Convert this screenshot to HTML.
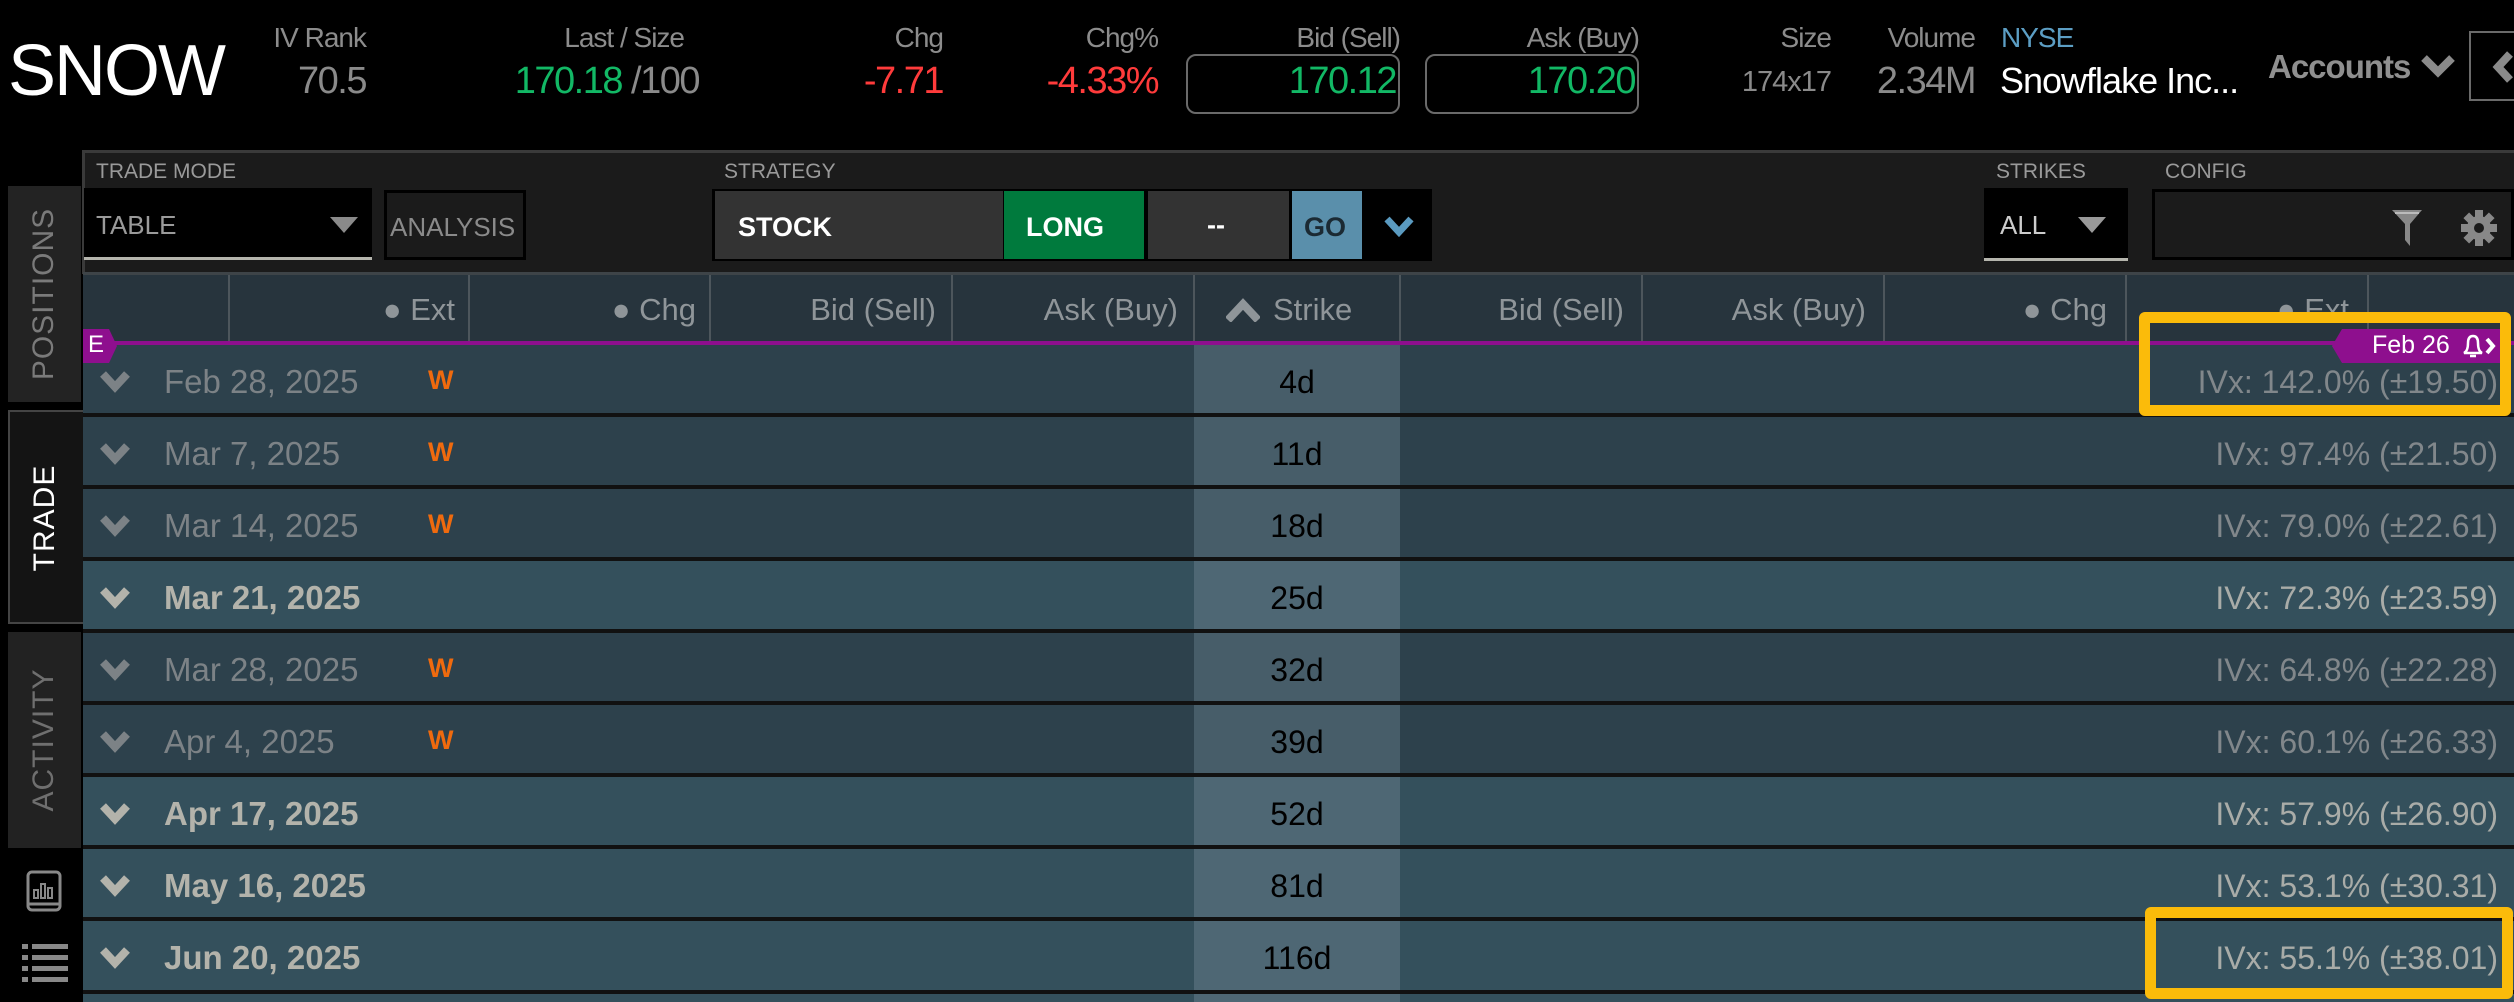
<!DOCTYPE html>
<html style="width:2514px;height:1002px;overflow:hidden"><head><meta charset="utf-8"><style>
*{margin:0;padding:0;box-sizing:border-box}
body{width:2514px;height:1002px;background:#000;position:relative;overflow:hidden;font-family:"Liberation Sans",sans-serif}
.a{position:absolute;white-space:nowrap}
.r{text-align:right}
.lbl{color:#8c8c8c;font-size:28px;letter-spacing:-1px}
.val{font-size:38px;letter-spacing:-1.5px}
.g{color:#12b865}.red{color:#ff3b3b}.gr{color:#8a8a8a}
.box{position:absolute;border:2px solid #6a6a6a;border-radius:10px}
.tl{color:#9a9a9a;font-size:21px;top:160px}
.hc{color:#8f9599;font-size:31px;top:292px}
.row{position:absolute;left:83px;width:2431px;height:72px;border-bottom:4px solid #111}
.wk{background:#2d414c}.mo{background:#34505c}
.wk .sk{background:#475d69}.mo .sk{background:#4e6774}
.sk{position:absolute;left:1111px;width:206px;top:0;bottom:0;color:#000;font-size:32px;text-align:center;line-height:74px}
.dt{position:absolute;left:81px;font-size:33px;line-height:74px}
.wk .dt{color:#7c8286}.mo .dt{color:#b3b3ab;font-weight:bold}
.w{position:absolute;left:345px;top:20px;color:#ef6a0e;font-weight:bold;font-size:27px}
.iv{position:absolute;right:16px;font-size:32px;line-height:74px}
.wk .iv{color:#81878b}.mo .iv{color:#a9aca8}
.chev{position:absolute;left:17px;top:26px}
.sep{position:absolute;top:275px;width:2px;height:67px;background:#4d565c}
</style></head><body>
<!-- header -->
<div class="a" style="left:8px;top:30px;color:#fff;font-size:72px;letter-spacing:-2px">SNOW</div>
<div class="a lbl r" style="right:2148px;top:22px">IV Rank</div>
<div class="a val gr r" style="right:2148px;top:60px">70.5</div>
<div class="a lbl r" style="right:1830px;top:22px">Last / Size</div>
<div class="a val r" style="right:1815px;top:60px"><span class="g">170.18</span><span class="gr"> /100</span></div>
<div class="a lbl r" style="right:1571px;top:22px">Chg</div>
<div class="a val red r" style="right:1571px;top:60px">-7.71</div>
<div class="a lbl r" style="right:1356px;top:22px">Chg%</div>
<div class="a val red r" style="right:1356px;top:60px">-4.33%</div>
<div class="a lbl r" style="right:1114px;top:22px">Bid (Sell)</div>
<div class="box" style="left:1186px;top:54px;width:214px;height:60px"></div>
<div class="a val g r" style="right:1118px;top:60px">170.12</div>
<div class="a lbl r" style="right:875px;top:22px">Ask (Buy)</div>
<div class="box" style="left:1425px;top:54px;width:214px;height:60px"></div>
<div class="a val g r" style="right:879px;top:60px">170.20</div>
<div class="a lbl r" style="right:683px;top:22px">Size</div>
<div class="a gr r" style="right:683px;top:66px;font-size:29px;letter-spacing:-1px">174x17</div>
<div class="a lbl r" style="right:539px;top:22px">Volume</div>
<div class="a val gr r" style="right:539px;top:60px">2.34M</div>
<div class="a" style="left:2001px;top:22px;color:#5c9ec4;font-size:28px;letter-spacing:-1px">NYSE</div>
<div class="a" style="left:2000px;top:60px;color:#fff;font-size:36px;letter-spacing:-1px">Snowflake Inc...</div>
<div class="a" style="left:2268px;top:48px;color:#8f8f8f;font-size:33px;font-weight:bold;letter-spacing:-1px">Accounts</div>
<svg class="a" style="left:2420px;top:54px" width="36" height="26" viewBox="0 0 36 26"><path d="M4 4 L18 18 L32 4" fill="none" stroke="#8a8a8a" stroke-width="8"/></svg>
<div class="a" style="left:2469px;top:31px;width:50px;height:70px;border:2px solid #6a6a6a"></div>
<svg class="a" style="left:2490px;top:50px" width="24" height="34" viewBox="0 0 24 34"><path d="M20 4 L8 17 L20 30" fill="none" stroke="#8a8a8a" stroke-width="8"/></svg>

<!-- sidebar -->
<div class="a" style="left:8px;top:186px;width:73px;height:216px;background:#232323"></div>
<div class="a" style="left:44px;top:294px;transform:translate(-50%,-50%) rotate(-90deg);color:#7a7a7a;font-size:30px;letter-spacing:1px">POSITIONS</div>
<div class="a" style="left:8px;top:410px;width:75px;height:214px;background:#141414;border:2px solid #444;border-right:none"></div>
<div class="a" style="left:45px;top:518px;transform:translate(-50%,-50%) rotate(-90deg);color:#fff;font-size:30px;letter-spacing:1px">TRADE</div>
<div class="a" style="left:8px;top:632px;width:73px;height:216px;background:#222"></div>
<div class="a" style="left:44px;top:740px;transform:translate(-50%,-50%) rotate(-90deg);color:#6f6f6f;font-size:30px;letter-spacing:1px">ACTIVITY</div>
<svg class="a" style="left:26px;top:870px" width="36" height="44" viewBox="0 0 36 44"><rect x="2" y="2" width="32" height="38" rx="4" fill="none" stroke="#888" stroke-width="3"/><path d="M2 34 H34" stroke="#888" stroke-width="3"/><rect x="8" y="20" width="4" height="8" fill="none" stroke="#888" stroke-width="2"/><rect x="15" y="14" width="4" height="14" fill="none" stroke="#888" stroke-width="2"/><rect x="22" y="18" width="4" height="10" fill="none" stroke="#888" stroke-width="2"/></svg>
<svg class="a" style="left:22px;top:942px" width="46" height="42" viewBox="0 0 46 42"><g fill="#888"><rect x="0" y="2" width="6" height="5"/><rect x="10" y="2" width="36" height="5"/><rect x="0" y="13" width="6" height="5"/><rect x="10" y="13" width="36" height="5"/><rect x="0" y="24" width="6" height="5"/><rect x="10" y="24" width="36" height="5"/><rect x="0" y="35" width="6" height="5"/><rect x="10" y="35" width="36" height="5"/></g></svg>

<!-- panel toolbar -->
<div class="a" style="left:82px;top:150px;width:2432px;height:124px;background:#1b1b1b;border-top:3px solid #3a3a3a;border-left:3px solid #3a3a3a"></div>
<div class="a tl" style="left:96px">TRADE MODE</div>
<div class="a" style="left:84px;top:188px;width:288px;height:72px;background:#000;border-bottom:3px solid #b5b5ad"></div>
<div class="a" style="left:96px;top:210px;color:#9a9a9a;font-size:26px">TABLE</div>
<svg class="a" style="left:330px;top:217px" width="28" height="16"><path d="M0 0 H28 L14 16Z" fill="#8a8a8a"/></svg>
<div class="a" style="left:384px;top:190px;width:142px;height:70px;background:#1b1b1b;border:3px solid #000"></div>
<div class="a" style="left:390px;top:212px;color:#8a8a8a;font-size:26px">ANALYSIS</div>
<div class="a tl" style="left:724px">STRATEGY</div>
<div class="a" style="left:712px;top:189px;width:720px;height:72px;background:#000"></div>
<div class="a" style="left:715px;top:191px;width:288px;height:68px;background:#333"></div>
<div class="a" style="left:738px;top:212px;color:#fff;font-size:27px;font-weight:bold">STOCK</div>
<div class="a" style="left:1004px;top:191px;width:140px;height:68px;background:#007a3d"></div>
<div class="a" style="left:1026px;top:212px;color:#fff;font-size:27px;font-weight:bold">LONG</div>
<div class="a" style="left:1148px;top:191px;width:141px;height:68px;background:#333"></div>
<div class="a" style="left:1207px;top:210px;color:#fff;font-size:27px;font-weight:bold">--</div>
<div class="a" style="left:1292px;top:191px;width:70px;height:68px;background:#5a8fab"></div>
<div class="a" style="left:1304px;top:212px;color:#1b2a33;font-size:27px;font-weight:bold">GO</div>
<svg class="a" style="left:1384px;top:216px" width="30" height="22"><path d="M3 3 L15 16 L27 3" fill="none" stroke="#5a9ac0" stroke-width="7"/></svg>
<div class="a tl" style="left:1996px">STRIKES</div>
<div class="a" style="left:1984px;top:188px;width:144px;height:73px;background:#000;border-bottom:3px solid #b5b5ad"></div>
<div class="a" style="left:2000px;top:210px;color:#ccc;font-size:26px">ALL</div>
<svg class="a" style="left:2078px;top:217px" width="28" height="16"><path d="M0 0 H28 L14 16Z" fill="#999"/></svg>
<div class="a tl" style="left:2165px">CONFIG</div>
<div class="a" style="left:2152px;top:189px;width:362px;height:71px;background:#1b1b1b;border:3px solid #000"></div>
<svg class="a" style="left:2392px;top:210px" width="30" height="36" viewBox="0 0 30 36"><path d="M0 0 H30 L18 14 V36 L13 30 V14Z" fill="#888"/><path d="M3 3 H27" stroke="#bbb" stroke-width="2"/></svg>
<svg class="a" style="left:2461px;top:210px" width="36" height="36" viewBox="-18 -18 36 36"><g fill="#888"><circle r="12"/><rect x="-4" y="-18" width="8" height="36"/><rect x="-4" y="-18" width="8" height="36" transform="rotate(45)"/><rect x="-4" y="-18" width="8" height="36" transform="rotate(90)"/><rect x="-4" y="-18" width="8" height="36" transform="rotate(135)"/></g><circle r="5" fill="#1b1b1b"/></svg>

<!-- table header -->
<div class="a" style="left:83px;top:272px;width:2431px;height:73px;background:#27343d;border-top:3px solid #3e4448"></div>
<div class="sep" style="left:228px"></div><div class="sep" style="left:468px"></div><div class="sep" style="left:709px"></div><div class="sep" style="left:951px"></div><div class="sep" style="left:1193px"></div><div class="sep" style="left:1399px"></div><div class="sep" style="left:1641px"></div><div class="sep" style="left:1883px"></div><div class="sep" style="left:2125px"></div><div class="sep" style="left:2367px"></div>
<div class="a hc r" style="right:2059px">● Ext</div>
<div class="a hc r" style="right:1818px">● Chg</div>
<div class="a hc r" style="right:1578px">Bid (Sell)</div>
<div class="a hc r" style="right:1336px">Ask (Buy)</div>
<svg class="a" style="left:1226px;top:298px" width="34" height="24"><path d="M2 22 L17 6 L32 22" fill="none" stroke="#8f9599" stroke-width="8"/></svg>
<div class="a hc" style="left:1273px">Strike</div>
<div class="a hc r" style="right:890px">Bid (Sell)</div>
<div class="a hc r" style="right:648px">Ask (Buy)</div>
<div class="a hc r" style="right:407px">● Chg</div>
<div class="a hc r" style="right:165px">● Ext</div>

<!-- rows -->
<div class="row wk" style="top:345px"><svg class="chev" width="30" height="22"><path d="M3 3 L15 16 L27 3" fill="none" stroke="#7c8286" stroke-width="8"/></svg><div class="dt">Feb 28, 2025</div><div class="w">W</div><div class="sk">4d</div><div class="iv">IVx: 142.0% (±19.50)</div></div>
<div class="row wk" style="top:417px"><svg class="chev" width="30" height="22"><path d="M3 3 L15 16 L27 3" fill="none" stroke="#7c8286" stroke-width="8"/></svg><div class="dt">Mar 7, 2025</div><div class="w">W</div><div class="sk">11d</div><div class="iv">IVx: 97.4% (±21.50)</div></div>
<div class="row wk" style="top:489px"><svg class="chev" width="30" height="22"><path d="M3 3 L15 16 L27 3" fill="none" stroke="#7c8286" stroke-width="8"/></svg><div class="dt">Mar 14, 2025</div><div class="w">W</div><div class="sk">18d</div><div class="iv">IVx: 79.0% (±22.61)</div></div>
<div class="row mo" style="top:561px"><svg class="chev" width="30" height="22"><path d="M3 3 L15 16 L27 3" fill="none" stroke="#b3b3ab" stroke-width="8"/></svg><div class="dt">Mar 21, 2025</div><div class="sk">25d</div><div class="iv">IVx: 72.3% (±23.59)</div></div>
<div class="row wk" style="top:633px"><svg class="chev" width="30" height="22"><path d="M3 3 L15 16 L27 3" fill="none" stroke="#7c8286" stroke-width="8"/></svg><div class="dt">Mar 28, 2025</div><div class="w">W</div><div class="sk">32d</div><div class="iv">IVx: 64.8% (±22.28)</div></div>
<div class="row wk" style="top:705px"><svg class="chev" width="30" height="22"><path d="M3 3 L15 16 L27 3" fill="none" stroke="#7c8286" stroke-width="8"/></svg><div class="dt">Apr 4, 2025</div><div class="w">W</div><div class="sk">39d</div><div class="iv">IVx: 60.1% (±26.33)</div></div>
<div class="row mo" style="top:777px"><svg class="chev" width="30" height="22"><path d="M3 3 L15 16 L27 3" fill="none" stroke="#b3b3ab" stroke-width="8"/></svg><div class="dt">Apr 17, 2025</div><div class="sk">52d</div><div class="iv">IVx: 57.9% (±26.90)</div></div>
<div class="row mo" style="top:849px"><svg class="chev" width="30" height="22"><path d="M3 3 L15 16 L27 3" fill="none" stroke="#b3b3ab" stroke-width="8"/></svg><div class="dt">May 16, 2025</div><div class="sk">81d</div><div class="iv">IVx: 53.1% (±30.31)</div></div>
<div class="row mo" style="top:921px;height:73px"><svg class="chev" width="30" height="22"><path d="M3 3 L15 16 L27 3" fill="none" stroke="#b3b3ab" stroke-width="8"/></svg><div class="dt">Jun 20, 2025</div><div class="sk">116d</div><div class="iv">IVx: 55.1% (±38.01)</div></div>
<div class="a" style="left:83px;top:994px;width:2431px;height:8px;background:#34505c"></div>
<div class="a" style="left:1194px;top:994px;width:206px;height:8px;background:#4e6774"></div>

<!-- purple line & markers -->
<div class="a" style="left:83px;top:341px;width:2431px;height:4px;background:#8e0f8e"></div>
<svg class="a" style="left:83px;top:329px" width="36" height="34"><path d="M0 0 H26 L34 17 L26 34 H0Z" fill="#8e0f8e"/></svg>
<div class="a" style="left:88px;top:331px;color:#fff;font-size:24px">E</div>
<svg class="a" style="left:2332px;top:329px" width="176" height="34"><path d="M10 0 H176 V34 H10 L0 17Z" fill="#8e0f8e"/></svg>
<div class="a" style="left:2372px;top:331px;color:#fff;font-size:25px">Feb 26</div>
<svg class="a" style="left:2460px;top:333px" width="40" height="26" viewBox="0 0 40 26"><path d="M4 20 Q8 18 8 10 Q8 3 13 3 Q18 3 18 10 Q18 18 22 20Z M10 23 H16" fill="none" stroke="#fff" stroke-width="2.5"/><path d="M27 6 L33 13 L27 20" fill="none" stroke="#fff" stroke-width="4"/></svg>

<!-- highlight boxes -->
<div class="a" style="left:2139px;top:312px;width:372px;height:104px;border:11px solid #fbbb0a;border-radius:6px"></div>
<div class="a" style="left:2145px;top:907px;width:368px;height:92px;border:11px solid #fbbb0a;border-radius:6px"></div>
</body></html>
